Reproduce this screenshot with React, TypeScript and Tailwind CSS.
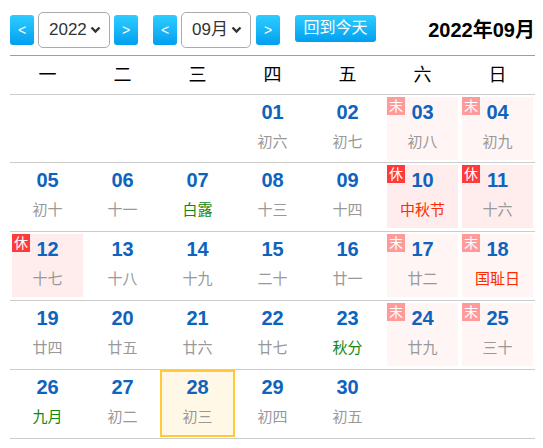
import React from "react";

type Day = {
  d: number;
  lunar: string;
  tone?: "green" | "red";
  badge?: "末" | "休";
  today?: boolean;
};

const weekNames = ["一", "二", "三", "四", "五", "六", "日"];

const days: Day[] = [
  { d: 1, lunar: "初六" },
  { d: 2, lunar: "初七" },
  { d: 3, lunar: "初八", badge: "末" },
  { d: 4, lunar: "初九", badge: "末" },
  { d: 5, lunar: "初十" },
  { d: 6, lunar: "十一" },
  { d: 7, lunar: "白露", tone: "green" },
  { d: 8, lunar: "十三" },
  { d: 9, lunar: "十四" },
  { d: 10, lunar: "中秋节", tone: "red", badge: "休" },
  { d: 11, lunar: "十六", badge: "休" },
  { d: 12, lunar: "十七", badge: "休" },
  { d: 13, lunar: "十八" },
  { d: 14, lunar: "十九" },
  { d: 15, lunar: "二十" },
  { d: 16, lunar: "廿一" },
  { d: 17, lunar: "廿二", badge: "末" },
  { d: 18, lunar: "国耻日", tone: "red", badge: "末" },
  { d: 19, lunar: "廿四" },
  { d: 20, lunar: "廿五" },
  { d: 21, lunar: "廿六" },
  { d: 22, lunar: "廿七" },
  { d: 23, lunar: "秋分", tone: "green" },
  { d: 24, lunar: "廿九", badge: "末" },
  { d: 25, lunar: "三十", badge: "末" },
  { d: 26, lunar: "九月", tone: "green" },
  { d: 27, lunar: "初二" },
  { d: 28, lunar: "初三", today: true },
  { d: 29, lunar: "初四" },
  { d: 30, lunar: "初五" },
];

// September 2022 starts on a Thursday -> 3 blanks before
const cells: (Day | null)[] = [null, null, null, ...days, null, null, null, null, null];
const rows: (Day | null)[][] = [];
for (let i = 0; i < cells.length; i += 7) rows.push(cells.slice(i, i + 7));

const NavBtn = ({ label }: { label: string }) => (
  <button className="w-[24px] h-[30px] rounded-[3px] bg-gradient-to-b from-[#2ccdff] to-[#009ff0] text-white text-[14px] leading-none flex items-center justify-center">
    {label}
  </button>
);

const FakeSelect = ({ value, width }: { value: string; width: string }) => (
  <div
    className={`${width} h-[36px] rounded-[5px] border border-[#aaa] bg-white flex items-center justify-between pl-[10px] pr-[8px] text-[17px] text-[#333]`}
  >
    <span>{value}</span>
    <svg width="11" height="8" viewBox="0 0 11 8">
      <path d="M1.5 1.5 L5.5 5.5 L9.5 1.5" fill="none" stroke="#333" strokeWidth="2.4" />
    </svg>
  </div>
);

const Cell = ({ day }: { day: Day | null }) => {
  if (!day) return <div className="w-[75px]" />;
  let box = "bg-transparent";
  if (day.badge === "末") box = "bg-[#fff5f5]";
  if (day.badge === "休") box = "bg-[#ffeded]";
  if (day.today) box = "bg-[#fff8e7] outline-2 outline-[#ffc83d]";
  const lunarColor =
    day.tone === "green" ? "text-[#118811]" : day.tone === "red" ? "text-[#ff2a00]" : "text-[#999]";
  return (
    <div className="w-[75px] pt-[2px]">
      <div className={`relative ml-[2px] w-[71px] h-[63px] flex flex-col items-center pt-[5px] ${box}`}>
        {day.badge && (
          <span
            className={`absolute left-0 top-0 w-[18px] h-[18px] flex items-center justify-center text-white text-[14px] leading-none ${
              day.badge === "末" ? "bg-[#ff9a9a]" : "bg-[#ff3a3a]"
            }`}
          >
            {day.badge}
          </span>
        )}
        <span className="text-[20px] leading-[20px] font-bold text-[#0e64bd]">
          {String(day.d).padStart(2, "0")}
        </span>
        <span className={`mt-[10px] text-[15px] leading-[20px] ${lunarColor}`}>{day.lunar}</span>
      </div>
    </div>
  );
};

export default function App() {
  return (
    <div
      className="w-[543px] h-[448px] bg-white overflow-hidden"
      style={{ fontFamily: '"Liberation Sans", "Noto Sans CJK SC", sans-serif' }}
    >
      <div className="ml-[10px] w-[525px]">
        <div className="h-[55px] pt-[4px] flex items-center">
          <NavBtn label="<" />
          <div className="ml-[4px]">
            <FakeSelect value="2022" width="w-[72px]" />
          </div>
          <div className="ml-[4px]">
            <NavBtn label=">" />
          </div>
          <div className="ml-[15px]">
            <NavBtn label="<" />
          </div>
          <div className="ml-[4px]">
            <FakeSelect value="09月" width="w-[70px]" />
          </div>
          <div className="ml-[5px]">
            <NavBtn label=">" />
          </div>
          <button className="ml-[15px] -mt-[3px] w-[81px] h-[27px] rounded-[3px] bg-gradient-to-b from-[#2ccdff] to-[#009ff0] text-white text-[16px] leading-none">
            回到今天
          </button>
          <div className="ml-auto text-[20px] font-bold text-black">2022年09月</div>
        </div>

        <div className="border-t border-[#6fa8e8] border-b border-b-[#ccc] h-[40px] flex items-center">
          {weekNames.map((w) => (
            <div key={w} className="w-[75px] text-center text-[18px] text-black">
              {w}
            </div>
          ))}
        </div>

        <div className="border-b border-[#e3eef0] pb-[9px]">
          {rows.map((r, i) => (
            <div
              key={i}
              className={`flex ${
                i === 0 ? "h-[68px] border-b border-[#ccc]" : i < rows.length - 1 ? "h-[69px] border-b border-[#ccc]" : "h-[68px]"
              }`}
            >
              {r.map((c, j) => (
                <Cell key={j} day={c} />
              ))}
            </div>
          ))}
        </div>
      </div>
    </div>
  );
}
